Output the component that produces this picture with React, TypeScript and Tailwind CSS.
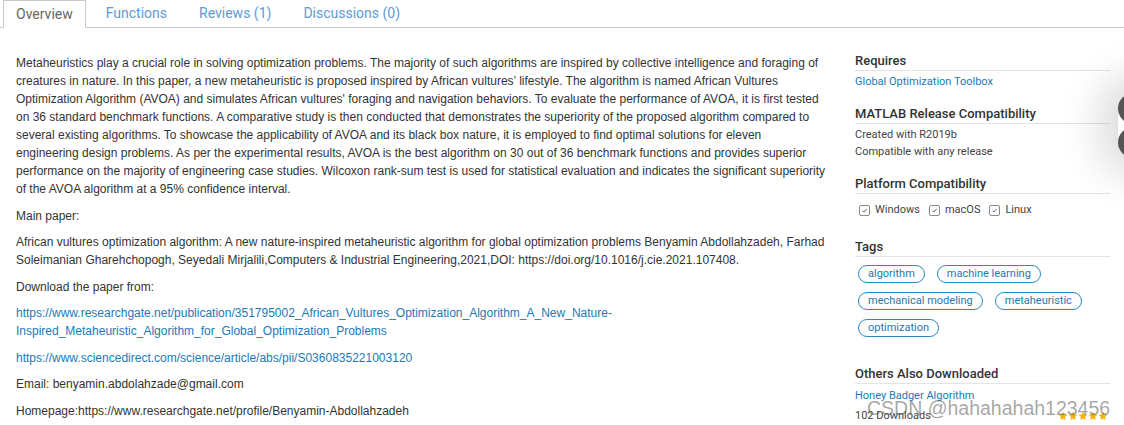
import React from "react";

const Star = () => (
  <svg width="10" height="10" viewBox="0 0 24 24" className="block">
    <path d="M12 1.5l3.1 6.9 7.4.8-5.6 5 1.6 7.4L12 17.8l-6.5 3.8 1.6-7.4-5.6-5 7.4-.8z" fill="#f5b400" />
  </svg>
);

const Check = () => (
  <span className="flex h-[11px] w-[11px] items-center justify-center rounded-[2px] border border-[#8a8a8a] bg-white">
    <svg width="7" height="7" viewBox="0 0 10 10">
      <path d="M2 5.2l2 2 4-4.4" fill="none" stroke="#555" strokeWidth="1.4" />
    </svg>
  </span>
);

const Heading = ({ children, className = "" }: { children: React.ReactNode; className?: string }) => (
  <div className={`border-b border-[#e4e4e4] pb-px text-[13px] font-medium leading-[16px] text-[#333] ${className}`}>{children}</div>
);

const tags = ["algorithm", "machine learning", "mechanical modeling", "metaheuristic", "optimization"];

export default function App() {
  return (
    <div className="relative h-[425px] w-[1124px] overflow-hidden bg-white" style={{ fontFamily: "Roboto, 'Liberation Sans', Arial, sans-serif" }}>
      {/* Tabs */}
      <div className="flex h-[28px] items-end border-b border-[#c8c8c8] pl-[3px] text-[14px]">
        <div className="-mb-px flex h-[28px] items-center border border-b-white border-[#c8c8c8] bg-white px-[12px] text-[#666]">Overview</div>
        <div className="ml-[4px] flex h-[27px] items-center px-[16px] text-[#5d9bd6]">Functions</div>
        <div className="flex h-[27px] items-center px-[16px] text-[#5d9bd6]">Reviews (1)</div>
        <div className="flex h-[27px] items-center px-[16px] text-[#5d9bd6]">Discussions (0)</div>
      </div>

      <div className="flex">
        {/* Main column */}
        <div className="w-[826px] pl-[16px] pt-[26px] text-[12px] leading-[18px] text-[#333]" style={{ fontFamily: "'Liberation Sans', Arial, sans-serif" }}>
          <p className="mb-[8.5px]">
            Metaheuristics play a crucial role in solving optimization problems. The majority of such algorithms are inspired by collective intelligence and foraging of creatures in nature. In this paper, a new metaheuristic is proposed inspired by African vultures’ lifestyle. The algorithm is named African Vultures Optimization Algorithm (AVOA) and simulates African vultures' foraging and navigation behaviors. To evaluate the performance of AVOA, it is first tested on 36 standard benchmark functions. A comparative study is then conducted that demonstrates the superiority of the proposed algorithm compared to several existing algorithms. To showcase the applicability of AVOA and its black box nature, it is employed to find optimal solutions for eleven engineering design problems. As per the experimental results, AVOA is the best algorithm on 30 out of 36 benchmark functions and provides superior performance on the majority of engineering case studies. Wilcoxon rank-sum test is used for statistical evaluation and indicates the significant superiority of the AVOA algorithm at a 95% confidence interval.
          </p>
          <p className="mb-[8.5px]">Main paper:</p>
          <p className="mb-[8.5px]">
            African vultures optimization algorithm: A new nature-inspired metaheuristic algorithm for global optimization problems Benyamin Abdollahzadeh, Farhad Soleimanian Gharehchopogh, Seyedali Mirjalili,Computers &amp; Industrial Engineering,2021,DOI: https://doi.org/10.1016/j.cie.2021.107408.
          </p>
          <p className="mb-[8.5px]">Download the paper from:</p>
          <p className="mb-[8.5px] text-[#1b79b8]">
            https://www.researchgate.net/publication/351795002_African_Vultures_Optimization_Algorithm_A_New_Nature-Inspired_Metaheuristic_Algorithm_for_Global_Optimization_Problems
          </p>
          <p className="mb-[8.5px] text-[#1b79b8]">https://www.sciencedirect.com/science/article/abs/pii/S0360835221003120</p>
          <p className="mb-[8.5px]">Email: benyamin.abdolahzade@gmail.com</p>
          <p className="mb-[8.5px]">Homepage:https://www.researchgate.net/profile/Benyamin-Abdollahzadeh</p>
        </div>

        {/* Sidebar */}
        <div className="ml-[29px] w-[255px] pt-[25px]">
          <Heading>Requires</Heading>
          <div className="mt-[3px] text-[11px] leading-[16px] text-[#1b79b8]">Global Optimization Toolbox</div>

          <Heading className="mt-[16px]">MATLAB Release Compatibility</Heading>
          <div className="mt-[2px] text-[11px] leading-[17px] text-[#444]">
            <div>Created with R2019b</div>
            <div>Compatible with any release</div>
          </div>

          <Heading className="mt-[16px]">Platform Compatibility</Heading>
          <div className="mt-[8px] flex h-[16px] items-center gap-[9px] pl-[4px] text-[11px] text-[#444]">
            <div className="flex items-center gap-[5px]"><Check />Windows</div>
            <div className="flex items-center gap-[5px]"><Check />macOS</div>
            <div className="flex items-center gap-[5px]"><Check />Linux</div>
          </div>

          <Heading className="mt-[21px]">Tags</Heading>
          <div className="mt-[8px] flex w-[230px] flex-wrap gap-x-[12px] gap-y-[9px] pl-[3px]">
            {tags.map((t) => (
              <span key={t} className="rounded-full border border-[#2b89c3] px-[9px] text-[11px] leading-[16px] text-[#2478b0]">
                {t}
              </span>
            ))}
          </div>

          <Heading className="mt-[29px]">Others Also Downloaded</Heading>
          <div className="mt-[4px] text-[11px] leading-[16px] text-[#1b79b8]">Honey Badger Algorithm</div>
          <div className="mt-[4px] flex items-center justify-between pr-[2px] text-[11px] leading-[16px] text-[#444]">
            <span>102 Downloads</span>
            <span className="flex">
              <Star />
              <Star />
              <Star />
              <Star />
              <Star />
            </span>
          </div>
        </div>
      </div>

      {/* Floating buttons at right edge */}
      <div className="absolute left-[1118px] top-[93px] flex flex-col gap-[3px] rounded-full shadow-[0_0_40px_18px_rgba(0,0,0,0.14)]">
        <div className="h-[31px] w-[31px] rounded-full bg-[#555]" />
        <div className="h-[31px] w-[31px] rounded-full bg-[#555]" />
      </div>

      {/* Watermark */}
      <div className="absolute left-[867px] top-[396px] text-[19.5px] leading-[24px] text-[rgba(90,90,90,0.55)]" style={{ fontFamily: "'Liberation Sans', Arial, sans-serif" }}>
        CSDN @hahahahah123456
      </div>
    </div>
  );
}
